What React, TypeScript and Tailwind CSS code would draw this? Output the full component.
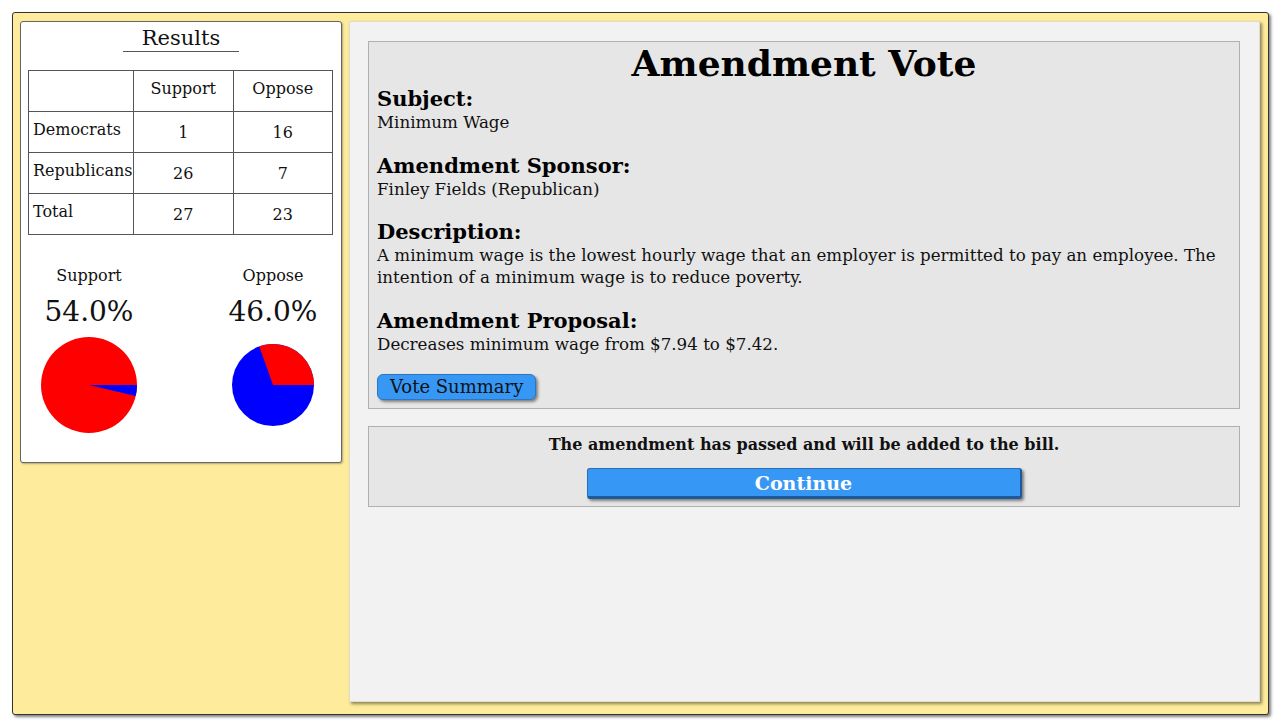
import React from 'react';

const serif = { fontFamily: '"DejaVu Serif", Georgia, serif' };

// pie drawn as a full circle with one wedge over it
const SupportPie = () => (
  <svg width="96" height="96" viewBox="0 0 96 96">
    <circle cx="48" cy="48" r="48" fill="#ff0000" />
    <path d="M48,48 L96,48 A48,48 0 0,1 94.71,59.07 Z" fill="#0000ff" />
  </svg>
);

const OpposePie = () => (
  <svg width="82" height="82" viewBox="0 0 82 82">
    <circle cx="41" cy="41" r="41" fill="#0000ff" />
    <path d="M41,41 L27.27,2.37 A41,41 0 0,1 82,41 Z" fill="#ff0000" />
  </svg>
);

const rows = [
  { party: 'Democrats', support: 1, oppose: 16 },
  { party: 'Republicans', support: 26, oppose: 7 },
  { party: 'Total', support: 27, oppose: 23 },
];

const Section = ({ title, children }: { title: string; children: React.ReactNode }) => (
  <div className="mb-[20.5px]">
    <div className="text-[21px] leading-[24px] font-bold text-black">{title}</div>
    <div className="text-[16.7px] leading-[22px] text-[#111]">{children}</div>
  </div>
);

export default function App() {
  return (
    <div className="w-[1280px] h-[720px] bg-white pt-[12px] pl-[12px]" style={serif}>
      <div className="w-[1257px] h-[703px] bg-[#feec9c] border border-[#333] rounded-[3px] shadow-[2px_2px_3px_rgba(0,0,0,0.5)] flex gap-[7px] pt-[8px] pl-[7px]">
        {/* Results */}
        <div className="w-[322px] h-[442px] bg-white border border-[#666] rounded-[3px] shadow-[1px_1px_2px_rgba(0,0,0,0.3)] px-[7px]">
          <div className="flex justify-center pt-[3px]">
            <div className="text-[21px] leading-[26px] text-[#111] border-b border-[#555] px-[19px]">Results</div>
          </div>
          <table className="mt-[18px] w-[305px] border-collapse text-[16px] text-[#111]">
            <tbody>
              <tr className="h-[41px]">
                <td className="w-[105px] border border-[#555]"></td>
                <td className="w-[100px] border border-[#555] text-center align-top pt-[6px]">Support</td>
                <td className="w-[100px] border border-[#555] text-center align-top pt-[6px]">Oppose</td>
              </tr>
              {rows.map((r) => (
                <tr key={r.party} className="h-[41px]">
                  <td className="border border-[#555] pl-[4px] pr-0 pb-[4px] whitespace-nowrap">{r.party}</td>
                  <td className="border border-[#555] text-center pt-[1px]">{r.support}</td>
                  <td className="border border-[#555] text-center pt-[1px]">{r.oppose}</td>
                </tr>
              ))}
            </tbody>
          </table>
          <div className="flex justify-between mt-[31px]">
            <div className="w-[122px] flex flex-col items-center">
              <div className="text-[16px] leading-[20px] text-[#111]">Support</div>
              <div className="text-[28px] leading-[36px] text-[#111] mt-[8px]">54.0%</div>
              <div className="h-[110px] flex items-center justify-center">
                <SupportPie />
              </div>
            </div>
            <div className="w-[122px] flex flex-col items-center">
              <div className="text-[16px] leading-[20px] text-[#111]">Oppose</div>
              <div className="text-[28px] leading-[36px] text-[#111] mt-[8px]">46.0%</div>
              <div className="h-[110px] flex items-center justify-center">
                <OpposePie />
              </div>
            </div>
          </div>
        </div>

        {/* Amendment */}
        <div className="w-[911px] h-[681px] bg-[#f2f2f2] border border-[#e0dccb] shadow-[2px_2px_3px_rgba(0,0,0,0.45)] pt-[19px] pl-[18px] pr-[19px]">
          <div className="bg-[#e6e6e6] border border-[#b0b0b0] px-[8px] pt-0 pb-[8px]">
            <div className="text-center text-[36px] leading-[42px] font-bold text-black mb-[3px]">Amendment Vote</div>
            <Section title="Subject:">Minimum Wage</Section>
            <Section title="Amendment Sponsor:">Finley Fields (Republican)</Section>
            <Section title="Description:">
              A minimum wage is the lowest hourly wage that an employer is permitted to pay an employee. The intention of a minimum wage is to reduce poverty.
            </Section>
            <Section title="Amendment Proposal:">Decreases minimum wage from $7.94 to $7.42.</Section>
            <button className="mt-[-1px] h-[26px] px-[12px] bg-[#3797f5] border border-[#2f76c0] rounded-[6px] shadow-[2px_2px_3px_rgba(0,0,0,0.45)] text-[18px] leading-[24px] text-[#111]" style={serif}>
              Vote Summary
            </button>
          </div>

          <div className="mt-[17px] h-[81px] bg-[#e6e6e6] border border-[#b0b0b0] flex flex-col items-center pt-[7px]">
            <div className="text-[16px] leading-[22px] font-bold text-[#111]">The amendment has passed and will be added to the bill.</div>
            <button className="mt-[12px] w-[435px] h-[31px] bg-[#3797f5] border border-[#2b6fb5] border-b-[3px] border-b-[#1e5a99] border-r-[2px] border-r-[#1e5a99] rounded-[3px] shadow-[2px_2px_3px_rgba(0,0,0,0.45)] text-white font-bold text-[19px] leading-[24px]" style={serif}>
              Continue
            </button>
          </div>
        </div>
      </div>
    </div>
  );
}
